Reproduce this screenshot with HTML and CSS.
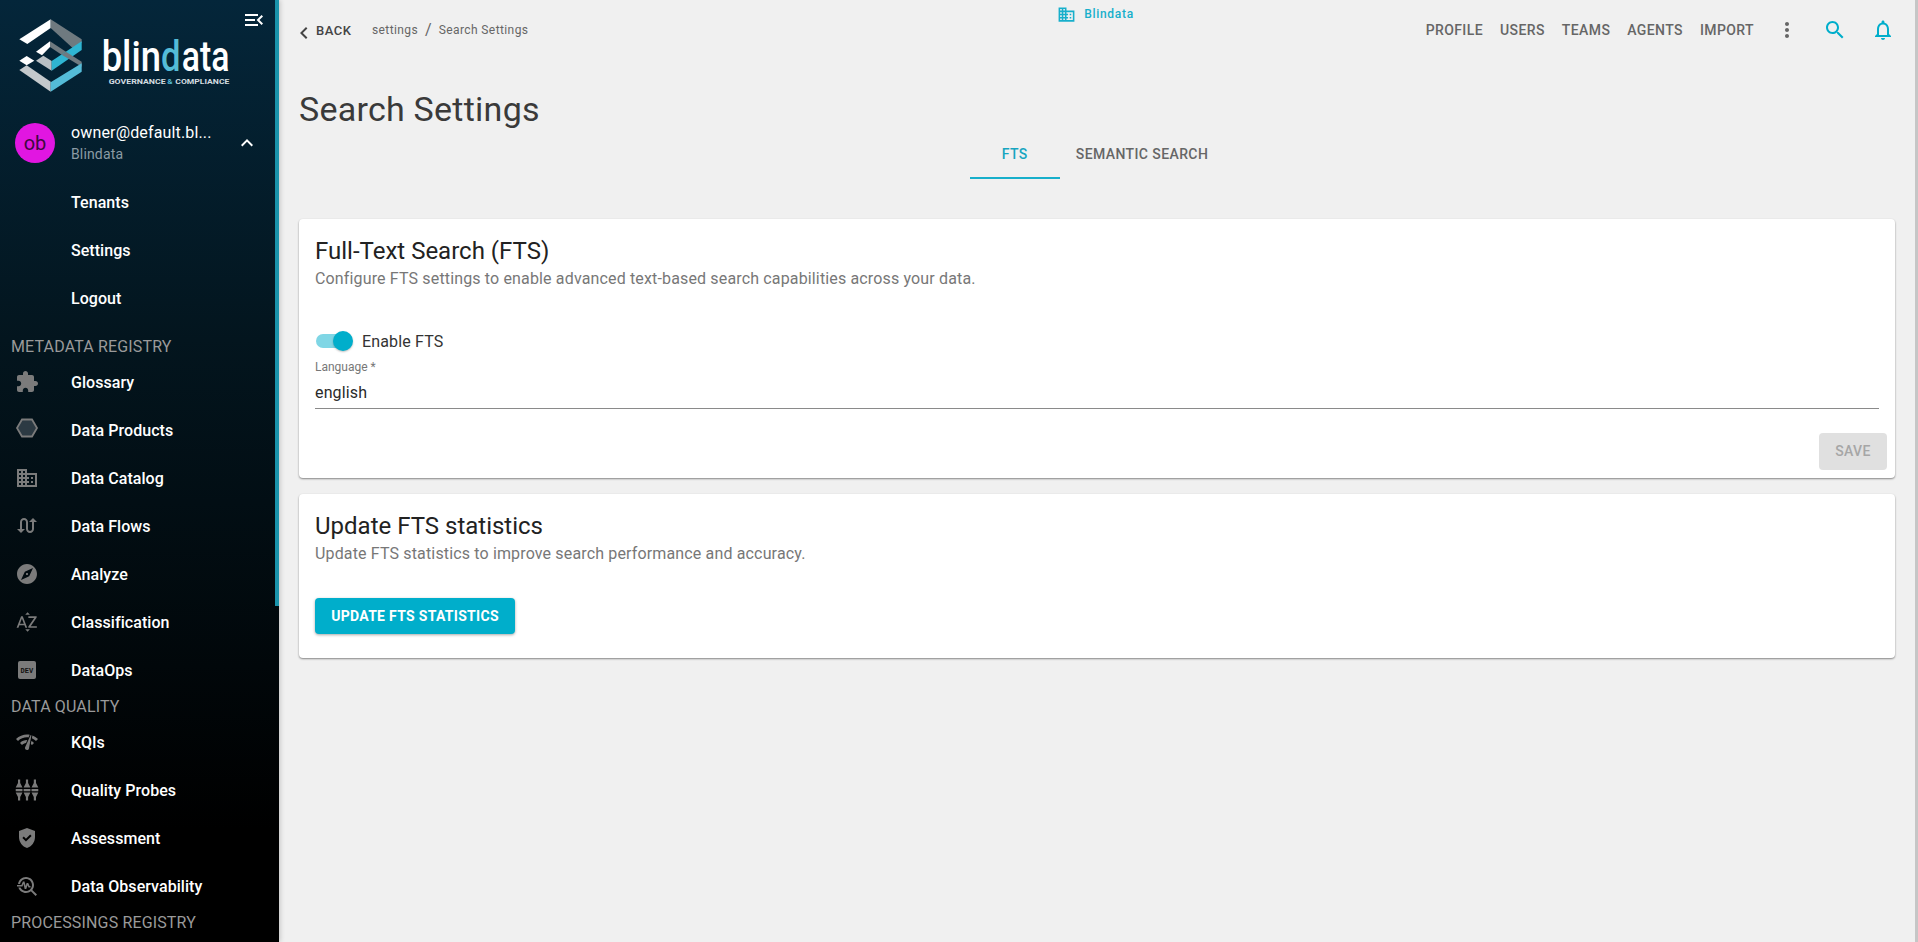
FILE: index.html
```html
<!DOCTYPE html>
<html lang="en">
<head>
  <meta charset="UTF-8">
  <title>Blindata - Search Settings</title>
  <link rel="stylesheet" href="styles.css">
</head>
<body>
  <div class="app">
    <aside class="sidebar">
      <div class="scroll-thumb"></div>
      <div class="logo-block">
        <svg class="logo" width="240" height="108" viewBox="0 0 720 324">
          <polygon points="58,118 152,58 152,84 82,132" fill="#ffffff"/>
          <polygon points="152,58 245,118 245,128 218,144 152,84" fill="#6f7a80"/>
          <polygon points="108,155 150,124 150,141 126,166" fill="#ffffff"/>
          <polygon points="150,124 198,155 185,164 150,141" fill="#6f7a80"/>
          <polygon points="58,182 80,168 103,182 80,196" fill="#ffffff"/>
          <polygon points="108,182 130,167 155,183 155,212" fill="#b9c0c4"/>
          <polygon points="155,183 245,124 245,150 155,212" fill="#2fb5d2"/>
          <polygon points="198,155 245,185 245,200 218,184 185,164" fill="#6f7a80"/>
          <polygon points="58,210 80,196 152,245 152,275" fill="#c4c9cc"/>
          <polygon points="152,275 245,215 245,190 152,247" fill="#54bcd8"/>
          <text transform="translate(305 212) scale(.84 1)" class="logo-name">blin</text>
          <text transform="translate(483 212) scale(.8 1)" class="logo-name logo-d">d</text>
          <text transform="translate(545 212) scale(.78 1)" class="logo-name">ata</text>
          <text x="326" y="252" class="logo-sub" textLength="171" lengthAdjust="spacingAndGlyphs">GOVERNANCE</text>
          <text x="502" y="252" class="logo-sub logo-d" textLength="16" lengthAdjust="spacingAndGlyphs">&amp;</text>
          <text x="526" y="252" class="logo-sub" textLength="162" lengthAdjust="spacingAndGlyphs">COMPLIANCE</text>
        </svg>
        <svg class="menu-toggle" width="24" height="24" viewBox="0 0 24 24"><path d="M3 18h13v-2H3v2zm0-5h10v-2H3v2zm0-7v2h13V6H3zm18 9.59L17.42 12 21 8.41 19.59 7l-5 5 5 5L21 15.59z"/></svg>
      </div>

      <div class="user-row">
        <div class="avatar">ob</div>
        <div class="user-text">
          <div class="user-mail">owner@default.bl...</div>
          <div class="user-tenant">Blindata</div>
        </div>
        <svg class="user-chevron" width="24" height="24" viewBox="0 0 24 24"><path d="M12 8l-6 6 1.41 1.41L12 10.83l4.59 4.58L18 14z"/></svg>
      </div>
      <div class="user-menu">
        <a class="nav-row"><span class="nav-icon"></span>Tenants</a>
        <a class="nav-row"><span class="nav-icon"></span>Settings</a>
        <a class="nav-row"><span class="nav-icon"></span>Logout</a>
      </div>

      <div class="nav-title">METADATA REGISTRY</div>
      <a class="nav-row"><span class="nav-icon"><svg viewBox="0 0 24 24"><path d="M20.5 11H19V7c0-1.1-.9-2-2-2h-4V3.5C13 2.12 11.88 1 10.5 1S8 2.12 8 3.5V5H4c-1.1 0-1.99.9-1.99 2v3.8H3.5c1.49 0 2.7 1.21 2.7 2.7s-1.21 2.7-2.7 2.7H2V20c0 1.1.9 2 2 2h3.8v-1.5c0-1.49 1.21-2.7 2.7-2.7 1.49 0 2.7 1.21 2.7 2.7V22H17c1.1 0 2-.9 2-2v-4h1.5c1.38 0 2.5-1.12 2.5-2.5S21.88 11 20.5 11z"/></svg></span>Glossary</a>
      <a class="nav-row"><span class="nav-icon"><svg viewBox="0 0 24 24"><polygon class="hex" points="7,1.500 17,1.500 22,10 17,18.500 7,18.500 2,10"/></svg></span>Data Products</a>
      <a class="nav-row"><span class="nav-icon"><svg viewBox="0 0 24 24"><path d="M12 7V3H2v18h20V7H12zM6 19H4v-2h2v2zm0-4H4v-2h2v2zm0-4H4V9h2v2zm0-4H4V5h2v2zm4 12H8v-2h2v2zm0-4H8v-2h2v2zm0-4H8V9h2v2zm0-4H8V5h2v2zm10 12h-8v-2h2v-2h-2v-2h2v-2h-2V9h8v10zm-2-8h-2v2h2v-2zm0 4h-2v2h2v-2z"/></svg></span>Data Catalog</a>
      <a class="nav-row"><span class="nav-icon"><svg viewBox="0 0 24 24"><path d="M18 4l-4 4h3v7c0 1.1-.9 2-2 2s-2-.9-2-2V8c0-2.21-1.79-4-4-4S5 5.79 5 8v7H2l4 4 4-4H7V8c0-1.1.9-2 2-2s2 .9 2 2v7c0 2.21 1.79 4 4 4s4-1.79 4-4V8h3l-4-4z"/></svg></span>Data Flows</a>
      <a class="nav-row"><span class="nav-icon"><svg viewBox="0 0 24 24"><path d="M12 10.9c-.61 0-1.1.49-1.1 1.1s.49 1.1 1.1 1.1c.61 0 1.1-.49 1.1-1.1s-.49-1.1-1.1-1.1zM12 2C6.48 2 2 6.48 2 12s4.48 10 10 10 10-4.48 10-10S17.52 2 12 2zm2.19 12.19L6 18l3.81-8.19L18 6l-3.81 8.19z"/></svg></span>Analyze</a>
      <a class="nav-row"><span class="nav-icon"><svg viewBox="0 0 24 24"><path d="M14.94 4.66h-4.72l2.36-2.36zm-4.69 14.71h4.66l-2.33 2.33zM6.1 6.27L1.6 17.73h1.84l.92-2.45h5.11l.92 2.45h1.84L7.74 6.27H6.1zm-1.13 7.37l1.94-5.18 1.94 5.18H4.97zm10.76 2.5h6.12v1.59h-8.53v-1.29l5.92-8.56h-5.88v-1.6h8.3v1.26l-5.93 8.6z"/></svg></span>Classification</a>
      <a class="nav-row"><span class="nav-icon"><svg viewBox="0 0 24 24"><rect x="3" y="3" width="18" height="18" rx="2"/><text x="12" y="14.6" class="dev-text">DEV</text></svg></span>DataOps</a>

      <div class="nav-title">DATA QUALITY</div>
      <a class="nav-row"><span class="nav-icon"><svg viewBox="0 0 24 24"><path d="M15.9 5c-.17 0-.32.09-.41.23l-.07.15-5.18 11.65c-.16.29-.26.61-.26.96 0 1.11.9 2.01 2.01 2.01.96 0 1.77-.68 1.96-1.59l.01-.03L16.4 5.5c0-.28-.22-.5-.5-.5zM1 9l2 2c2.88-2.88 6.79-4.08 10.53-3.62l1.19-2.68C9.89 3.84 4.74 5.27 1 9zm20 2l2-2c-1.64-1.64-3.55-2.82-5.59-3.57l-.53 2.82c1.5.62 2.9 1.53 4.12 2.75zm-4 4l2-2c-.8-.8-1.7-1.42-2.66-1.89l-.55 2.92c.42.27.83.59 1.21.97zM5 13l2 2c1.13-1.13 2.56-1.79 4.03-2l1.28-2.88c-2.63-.08-5.3.87-7.31 2.88z"/></svg></span>KQIs</a>
      <a class="nav-row"><span class="nav-icon"><svg viewBox="0 0 24 24"><path d="M3 1.500h2.200v3.500L7.500 9.500H.7L3 5zM10.900 1.500h2.200v3.500l2.300 4.500H8.600L10.900 5zM18.800 1.500H21v3.500l2.300 4.500h-6.800L18.800 5zM.7 11h6.800v2.200H.7zM8.600 11h6.800v2.200H8.600zM16.500 11h6.800v2.200h-6.800zM.7 14.500h6.800L5.200 19v3.500H3V19zM8.600 14.500h6.800L13.100 19v3.500h-2.200V19zM16.500 14.500h6.800L21 19v3.500h-2.200V19z"/></svg></span>Quality Probes</a>
      <a class="nav-row"><span class="nav-icon"><svg viewBox="0 0 24 24"><path d="M12,2L4,5v6.09c0,5.05,3.41,9.76,8,10.91c4.59-1.15,8-5.86,8-10.91V5L12,2z M10.94,15.54L7.4,12l1.41-1.41l2.12,2.12l4.24-4.24 l1.41,1.41L10.94,15.54z"/></svg></span>Assessment</a>
      <a class="nav-row"><span class="nav-icon"><svg viewBox="0 0 24 24"><path d="M22 20.59l-4.69-4.69C18.37 14.55 19 12.85 19 11c0-4.42-3.58-8-8-8-4.08 0-7.44 3.05-7.93 7h2.02C5.57 7.17 8.03 5 11 5c3.31 0 6 2.69 6 6s-2.69 6-6 6c-2.42 0-4.5-1.44-5.45-3.5H3.400C4.450 16.690 7.460 19 11 19c1.850 0 3.550-.63 4.900-1.690L20.590 22 22 20.590zM8.430 9.690L9.650 15h1.640l1.260-3.780.95 2.280h2V12h-1l-1.250-3H11.600l-.94 2.960L9.500 7.500H7.900L6.430 11H2v1.500h5.500z"/></svg></span>Data Observability</a>

      <div class="nav-title">PROCESSINGS REGISTRY</div>
    </aside>

    <main class="main">
      <header class="topbar">
        <div class="topbar-left">
          <a class="back-link">
            <svg width="24" height="24" viewBox="0 0 24 24"><path d="M15.41 7.41L14 6l-6 6 6 6 1.41-1.41L10.83 12z"/></svg>
            BACK
          </a>
          <span class="crumb">settings</span>
          <span class="crumb-sep">/</span>
          <span class="crumb">Search Settings</span>
        </div>
        <div class="tenant">
          <svg width="19" height="19" viewBox="0 0 24 24"><path d="M12 7V3H2v18h20V7H12zM6 19H4v-2h2v2zm0-4H4v-2h2v2zm0-4H4V9h2v2zm0-4H4V5h2v2zm4 12H8v-2h2v2zm0-4H8v-2h2v2zm0-4H8V9h2v2zm0-4H8V5h2v2zm10 12h-8v-2h2v-2h-2v-2h2v-2h-2V9h8v10zm-2-8h-2v2h2v-2zm0 4h-2v2h2v-2z"/></svg>
          Blindata
        </div>
        <nav class="topbar-right">
          <a class="top-link">PROFILE</a>
          <a class="top-link">USERS</a>
          <a class="top-link">TEAMS</a>
          <a class="top-link">AGENTS</a>
          <a class="top-link">IMPORT</a>
          <svg class="top-icon more" width="24" height="24" viewBox="0 0 24 24"><path d="M12 8c1.100 0 2-.9 2-2s-.9-2-2-2-2 .9-2 2 .9 2 2 2zm0 2c-1.100 0-2 .9-2 2s.9 2 2 2 2-.9 2-2-.9-2-2-2zm0 6c-1.100 0-2 .9-2 2s.9 2 2 2 2-.9 2-2-.9-2-2-2z"/></svg>
          <svg class="top-icon accent" width="24" height="24" viewBox="0 0 24 24"><path d="M15.500 14h-.79l-.28-.27C15.410 12.590 16 11.110 16 9.500 16 5.910 13.090 3 9.500 3S3 5.910 3 9.500 5.910 16 9.500 16c1.610 0 3.090-.59 4.230-1.570l.27.28v.79l5 4.990L20.490 19l-4.990-5zm-6 0C7.010 14 5 11.990 5 9.500S7.010 5 9.500 5 14 7.010 14 9.500 11.990 14 9.500 14z"/></svg>
          <svg class="top-icon accent" width="24" height="24" viewBox="0 0 24 24"><path d="M12 22c1.100 0 2-.9 2-2h-4c0 1.100.9 2 2 2zm6-6v-5c0-3.070-1.630-5.640-4.500-6.320V4c0-.83-.67-1.500-1.500-1.500s-1.500.67-1.500 1.500v.68C7.640 5.360 6 7.920 6 11v5l-2 2v1h16v-1l-2-2zm-2 1H8v-6c0-2.480 1.510-4.500 4-4.500s4 2.020 4 4.500v6z"/></svg>
        </nav>
      </header>

      <h1 class="page-title">Search Settings</h1>

      <div class="tabs">
        <button class="tab active">FTS</button>
        <button class="tab">SEMANTIC SEARCH</button>
      </div>

      <section class="card">
        <h2 class="card-title">Full-Text Search (FTS)</h2>
        <p class="card-sub">Configure FTS settings to enable advanced text-based search capabilities across your data.</p>
        <div class="switch-row">
          <span class="switch"><span class="switch-thumb"></span></span>
          <span class="switch-label">Enable FTS</span>
        </div>
        <div class="field">
          <div class="field-label">Language *</div>
          <div class="field-value">english</div>
        </div>
        <div class="card-actions">
          <button class="btn-disabled">SAVE</button>
        </div>
      </section>

      <section class="card card-stats">
        <h2 class="card-title">Update FTS statistics</h2>
        <p class="card-sub">Update FTS statistics to improve search performance and accuracy.</p>
        <button class="btn-primary">UPDATE FTS STATISTICS</button>
      </section>
    </main>

    <div class="page-scrollbar"></div>
  </div>
</body>
</html>
```

FILE: styles.css
```css
* {
  box-sizing: border-box;
}
body {
  margin: 0;
  font-family: Roboto, sans-serif;
  background-color: #f0f0f0;
  color: #333;
}
.app {
  display: flex;
  height: 942px;
  overflow: hidden;
}

/* sidebar */
.sidebar {
  position: relative;
  flex: 0 0 279px;
  height: 942px;
  overflow: hidden;
  background: linear-gradient(#04263a, #03151e 36%, #000 88%);
  box-shadow: 1px 0 5px rgba(0, 0, 0, 0.2);
  color: #fff;
}
.scroll-thumb {
  position: absolute;
  top: 0;
  right: 0;
  width: 4px;
  height: 606px;
  background-color: #1a93ab;
}
.logo-block {
  position: relative;
  height: 108px;
}
.logo {
  display: block;
}
.logo-name {
  font-family: Roboto, sans-serif;
  font-size: 130px;
  font-weight: 500;
  fill: #fff;
}
.logo-sub {
  font-family: Roboto, sans-serif;
  font-size: 21px;
  font-weight: 700;
  fill: #d5dde0;
}
.logo-name.logo-d,
.logo-sub.logo-d {
  fill: #54bcd8;
}
.menu-toggle {
  position: absolute;
  top: 8px;
  right: 13px;
  fill: #fff;
}
.user-row {
  display: flex;
  align-items: center;
  height: 70px;
  padding-left: 15px;
}
.avatar {
  flex: 0 0 40px;
  height: 40px;
  margin-right: 16px;
  border-radius: 50%;
  background-color: #e116e1;
  color: #3f083f;
  font-size: 20px;
  line-height: 40px;
  text-align: center;
}
.user-text {
  width: 142px;
  padding-bottom: 2px;
}
.user-mail {
  font-size: 16px;
  line-height: 24px;
  letter-spacing: 0.15px;
  white-space: nowrap;
}
.user-tenant {
  color: #8b9ba4;
  font-size: 14px;
  line-height: 18px;
  letter-spacing: 0.15px;
}
.user-chevron {
  margin-left: 22px;
  fill: #fff;
}
.user-menu {
  padding-bottom: 12px;
}
.nav-row {
  display: flex;
  align-items: center;
  height: 48px;
  padding-left: 15px;
  color: #fff;
  font-size: 16px;
  font-weight: 500;
  letter-spacing: 0.05px;
}
.nav-icon {
  flex: 0 0 56px;
  height: 24px;
}
.nav-icon svg {
  display: block;
  width: 24px;
  height: 24px;
  fill: #7b7b7b;
}
.nav-icon .hex {
  fill: #2c3a43;
  stroke: #7b7b7b;
  stroke-width: 1.8;
}
.nav-icon .dev-text {
  font-family: "Liberation Mono", monospace;
  font-size: 7px;
  font-weight: 700;
  fill: #111;
  text-anchor: middle;
}
.nav-title {
  height: 24px;
  padding-left: 11px;
  color: #9a9a9a;
  font-size: 16px;
  line-height: 26px;
  letter-spacing: 0.15px;
}

/* main area */
.main {
  flex: 1;
  min-width: 0;
  padding: 0 20px;
}
.page-scrollbar {
  flex: 0 0 3px;
  background-color: #c6c6c6;
}
.topbar {
  display: grid;
  grid-template-columns: 1fr auto 1fr;
  height: 60px;
}
.topbar-left {
  display: flex;
  align-items: center;
  height: 60px;
}
.back-link {
  display: flex;
  align-items: center;
  width: 80px;
  margin-left: -7px;
  color: #444;
  font-size: 13px;
  font-weight: 500;
  letter-spacing: 0.5px;
}
.back-link svg {
  flex: 0 0 24px;
  margin-top: 6px;
  fill: #444;
}
.crumb {
  color: #666;
  font-size: 12px;
  letter-spacing: 0.4px;
}
.crumb-sep {
  margin: -2px 7px 0;
  color: #666;
  font-size: 16px;
}
.tenant {
  display: flex;
  align-items: center;
  gap: 8px;
  height: 28px;
  padding-right: 3px;
  color: #17afcb;
  font-size: 12px;
  font-weight: 500;
  letter-spacing: 0.7px;
}
.tenant svg {
  fill: #17afcb;
}
.topbar-right {
  display: flex;
  align-items: center;
  justify-content: flex-end;
  height: 60px;
}
.top-link {
  margin-left: 17px;
  color: #666;
  font-size: 14px;
  font-weight: 500;
  letter-spacing: 0.4px;
}
.top-icon {
  fill: #666;
}
.top-icon.more {
  margin-left: 21px;
}
.top-icon.accent {
  margin-left: 24px;
  fill: #00aecb;
}
.page-title {
  margin: 28px 0 0;
  color: #3a3a3a;
  font-size: 34px;
  font-weight: 400;
  line-height: 42px;
  letter-spacing: 0.25px;
}
.tabs {
  display: flex;
  justify-content: center;
  margin: 1px 0 40px;
}
.tab {
  min-width: 90px;
  height: 48px;
  padding: 0 16px;
  border: none;
  border-bottom: 2px solid transparent;
  background: none;
  color: #666;
  font-family: Roboto, sans-serif;
  font-size: 14px;
  font-weight: 500;
  letter-spacing: 0.4px;
}
.tab.active {
  border-bottom-color: #17afcb;
  color: #17a5c0;
}

/* cards */
.card {
  margin-bottom: 16px;
  padding: 16px 16px 8px;
  border-radius: 4px;
  background-color: #fff;
  box-shadow: 0 1px 2px rgba(0, 0, 0, 0.45);
}
.card-title {
  margin: 0;
  color: #222;
  font-size: 24px;
  font-weight: 400;
  line-height: 32px;
}
.card-sub {
  margin: 0;
  color: #777;
  font-size: 16px;
  line-height: 24px;
  letter-spacing: 0.15px;
}
.switch-row {
  display: flex;
  align-items: center;
  height: 38px;
  margin-top: 31px;
}
.switch {
  position: relative;
  width: 34px;
  height: 14px;
  margin-left: 1px;
  border-radius: 7px;
  background-color: #7fd6e5;
}
.switch-thumb {
  position: absolute;
  top: -3px;
  right: -3px;
  width: 20px;
  height: 20px;
  border-radius: 50%;
  background-color: #00aecb;
  box-shadow: 0 1px 2px rgba(0, 0, 0, 0.25);
}
.switch-label {
  margin-left: 12px;
  font-size: 16px;
  letter-spacing: 0.15px;
}
.field-label {
  color: #777;
  font-size: 12px;
  line-height: 14px;
}
.field-value {
  height: 35px;
  padding-top: 7px;
  border-bottom: 1px solid #8a8a8a;
  color: #2a2a2a;
  font-size: 16px;
  line-height: 24px;
  letter-spacing: 0.15px;
}
.card-actions {
  display: flex;
  justify-content: flex-end;
  margin: 24px -8px 0 0;
}
.btn-disabled {
  width: 68px;
  height: 37px;
  padding: 0 0 2px;
  border: none;
  border-radius: 4px;
  background-color: #e0e0e0;
  color: #a6a6a6;
  font-family: Roboto, sans-serif;
  font-size: 14px;
  font-weight: 500;
  letter-spacing: 0.4px;
}
.card-stats {
  padding-bottom: 24px;
}
.btn-primary {
  display: block;
  width: 200px;
  height: 36px;
  margin-top: 32px;
  border: none;
  border-radius: 4px;
  background-color: #00aecb;
  box-shadow: 0 1px 3px rgba(0, 0, 0, 0.35);
  color: #fff;
  font-family: Roboto, sans-serif;
  font-size: 14px;
  font-weight: 700;
  letter-spacing: 0.3px;
}
```
